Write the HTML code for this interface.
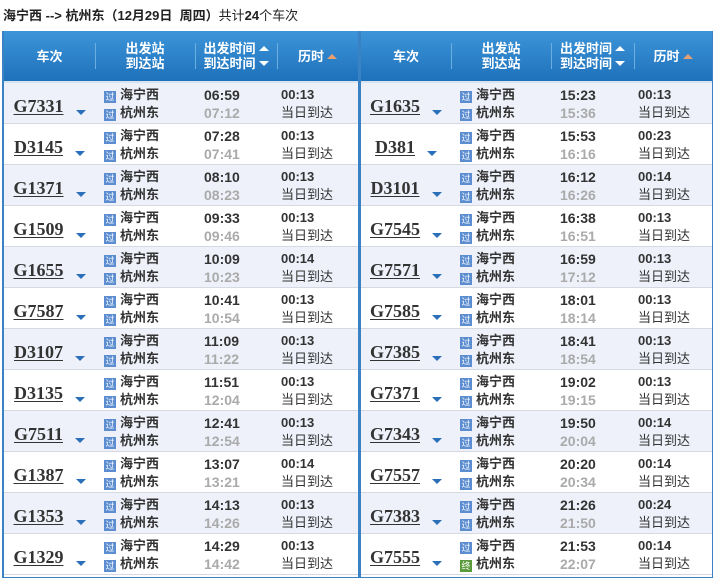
<!DOCTYPE html>
<html><head><meta charset="utf-8"><style>
*{margin:0;padding:0;box-sizing:border-box}
body{width:714px;height:578px;background:#fff;font-family:"Liberation Sans","Noto Sans CJK SC",sans-serif;color:#333;position:relative;overflow:hidden}
.title{position:absolute;left:3px;top:5px;font-size:13px;font-weight:bold;color:#222;white-space:nowrap}
.title span{font-weight:normal}
.tb{position:absolute;top:31px;height:547px;border-left:2px solid #3a82c4;border-right:1px solid #3a82c4;border-bottom:1px solid #3a82c4}
.hd{height:52px;background:linear-gradient(#3d95d8,#1e71bb);display:flex;color:#fff;font-weight:bold;font-size:13px;border-bottom:2px solid #d6e4f2}
.hd>div{display:flex;align-items:center;justify-content:center;text-align:center;line-height:15px;position:relative;white-space:nowrap}
.hd>div+div:before{content:"";position:absolute;left:0;top:12px;bottom:12px;border-left:1px solid #6aaee2}
.up{display:inline-block;width:0;height:0;border:5px solid transparent;border-bottom:5px solid #fff;border-top:0;margin-left:3px;vertical-align:2px}
.dn{display:inline-block;width:0;height:0;border:5px solid transparent;border-top:5px solid #fff;border-bottom:0;margin-left:3px;vertical-align:2px}
.or{border-bottom-color:#e8a070}
.r{height:41px;display:flex;border-bottom:1px solid #d5d9e2}
.r:nth-child(odd){background:#eef1fa}
.c1{display:flex;align-items:center;justify-content:center;padding-top:6px}
.num{font-family:"Liberation Serif",serif;font-weight:bold;font-size:18px;text-decoration:underline;color:#333;text-underline-offset:2px}
.ar{display:inline-block;width:0;height:0;border:5px solid transparent;border-top:5px solid #2a6fb8;border-bottom:0;margin-left:12px;margin-top:12px}
.c2{padding-left:9px;padding-top:3px;font-size:13px;font-weight:bold;line-height:18px}
.ic{display:inline-block;width:12px;height:12px;background:#5b8dd0;color:#fff;font-size:9px;line-height:12px;text-align:center;vertical-align:-1px;margin-right:4px;font-weight:normal}
.ic.g{background:#5a9a3a}
.c3{padding-left:9px;padding-top:3px;font-size:14px;font-weight:bold;line-height:18px}
.c3 b{display:block;color:#aaa}
.c4{padding-left:4px;padding-top:3px;font-size:13px;line-height:18px}
.c4 b{display:block}
</style></head><body>
<div class="title">海宁西 --&gt; 杭州东（12月29日&nbsp; 周四）<span>共计</span>24<span>个车次</span></div>

<div class="tb" style="left:2px;width:357px">
<div class="hd"><div style="width:91px">车次</div><div style="width:100px"><span>出发站<br>到达站</span></div><div style="width:82px"><span>出发时间<span class="up"></span><br>到达时间<span class="dn"></span></span></div><div style="width:81px"><span>历时<span class="up or"></span></span></div></div>
<div>
<div class="r"><div class="c1" style="width:91px"><span class="num">G7331</span><span class="ar"></span></div><div class="c2" style="width:100px"><span class="ic">过</span>海宁西<br><span class="ic">过</span>杭州东</div><div class="c3" style="width:82px">06:59<b>07:12</b></div><div class="c4"><b>00:13</b>当日到达</div></div>
<div class="r"><div class="c1" style="width:91px"><span class="num">D3145</span><span class="ar"></span></div><div class="c2" style="width:100px"><span class="ic">过</span>海宁西<br><span class="ic">过</span>杭州东</div><div class="c3" style="width:82px">07:28<b>07:41</b></div><div class="c4"><b>00:13</b>当日到达</div></div>
<div class="r"><div class="c1" style="width:91px"><span class="num">G1371</span><span class="ar"></span></div><div class="c2" style="width:100px"><span class="ic">过</span>海宁西<br><span class="ic">过</span>杭州东</div><div class="c3" style="width:82px">08:10<b>08:23</b></div><div class="c4"><b>00:13</b>当日到达</div></div>
<div class="r"><div class="c1" style="width:91px"><span class="num">G1509</span><span class="ar"></span></div><div class="c2" style="width:100px"><span class="ic">过</span>海宁西<br><span class="ic">过</span>杭州东</div><div class="c3" style="width:82px">09:33<b>09:46</b></div><div class="c4"><b>00:13</b>当日到达</div></div>
<div class="r"><div class="c1" style="width:91px"><span class="num">G1655</span><span class="ar"></span></div><div class="c2" style="width:100px"><span class="ic">过</span>海宁西<br><span class="ic">过</span>杭州东</div><div class="c3" style="width:82px">10:09<b>10:23</b></div><div class="c4"><b>00:14</b>当日到达</div></div>
<div class="r"><div class="c1" style="width:91px"><span class="num">G7587</span><span class="ar"></span></div><div class="c2" style="width:100px"><span class="ic">过</span>海宁西<br><span class="ic">过</span>杭州东</div><div class="c3" style="width:82px">10:41<b>10:54</b></div><div class="c4"><b>00:13</b>当日到达</div></div>
<div class="r"><div class="c1" style="width:91px"><span class="num">D3107</span><span class="ar"></span></div><div class="c2" style="width:100px"><span class="ic">过</span>海宁西<br><span class="ic">过</span>杭州东</div><div class="c3" style="width:82px">11:09<b>11:22</b></div><div class="c4"><b>00:13</b>当日到达</div></div>
<div class="r"><div class="c1" style="width:91px"><span class="num">D3135</span><span class="ar"></span></div><div class="c2" style="width:100px"><span class="ic">过</span>海宁西<br><span class="ic">过</span>杭州东</div><div class="c3" style="width:82px">11:51<b>12:04</b></div><div class="c4"><b>00:13</b>当日到达</div></div>
<div class="r"><div class="c1" style="width:91px"><span class="num">G7511</span><span class="ar"></span></div><div class="c2" style="width:100px"><span class="ic">过</span>海宁西<br><span class="ic">过</span>杭州东</div><div class="c3" style="width:82px">12:41<b>12:54</b></div><div class="c4"><b>00:13</b>当日到达</div></div>
<div class="r"><div class="c1" style="width:91px"><span class="num">G1387</span><span class="ar"></span></div><div class="c2" style="width:100px"><span class="ic">过</span>海宁西<br><span class="ic">过</span>杭州东</div><div class="c3" style="width:82px">13:07<b>13:21</b></div><div class="c4"><b>00:14</b>当日到达</div></div>
<div class="r"><div class="c1" style="width:91px"><span class="num">G1353</span><span class="ar"></span></div><div class="c2" style="width:100px"><span class="ic">过</span>海宁西<br><span class="ic">过</span>杭州东</div><div class="c3" style="width:82px">14:13<b>14:26</b></div><div class="c4"><b>00:13</b>当日到达</div></div>
<div class="r"><div class="c1" style="width:91px"><span class="num">G1329</span><span class="ar"></span></div><div class="c2" style="width:100px"><span class="ic">过</span>海宁西<br><span class="ic">过</span>杭州东</div><div class="c3" style="width:82px">14:29<b>14:42</b></div><div class="c4"><b>00:13</b>当日到达</div></div>
</div></div>

<div class="tb" style="left:359px;width:354px">
<div class="hd"><div style="width:90px">车次</div><div style="width:100px"><span>出发站<br>到达站</span></div><div style="width:83px"><span>出发时间<span class="up"></span><br>到达时间<span class="dn"></span></span></div><div style="width:78px"><span>历时<span class="up or"></span></span></div></div>
<div>
<div class="r"><div class="c1" style="width:90px"><span class="num">G1635</span><span class="ar"></span></div><div class="c2" style="width:100px"><span class="ic">过</span>海宁西<br><span class="ic">过</span>杭州东</div><div class="c3" style="width:83px">15:23<b>15:36</b></div><div class="c4"><b>00:13</b>当日到达</div></div>
<div class="r"><div class="c1" style="width:90px"><span class="num">D381</span><span class="ar"></span></div><div class="c2" style="width:100px"><span class="ic">过</span>海宁西<br><span class="ic">过</span>杭州东</div><div class="c3" style="width:83px">15:53<b>16:16</b></div><div class="c4"><b>00:23</b>当日到达</div></div>
<div class="r"><div class="c1" style="width:90px"><span class="num">D3101</span><span class="ar"></span></div><div class="c2" style="width:100px"><span class="ic">过</span>海宁西<br><span class="ic">过</span>杭州东</div><div class="c3" style="width:83px">16:12<b>16:26</b></div><div class="c4"><b>00:14</b>当日到达</div></div>
<div class="r"><div class="c1" style="width:90px"><span class="num">G7545</span><span class="ar"></span></div><div class="c2" style="width:100px"><span class="ic">过</span>海宁西<br><span class="ic">过</span>杭州东</div><div class="c3" style="width:83px">16:38<b>16:51</b></div><div class="c4"><b>00:13</b>当日到达</div></div>
<div class="r"><div class="c1" style="width:90px"><span class="num">G7571</span><span class="ar"></span></div><div class="c2" style="width:100px"><span class="ic">过</span>海宁西<br><span class="ic">过</span>杭州东</div><div class="c3" style="width:83px">16:59<b>17:12</b></div><div class="c4"><b>00:13</b>当日到达</div></div>
<div class="r"><div class="c1" style="width:90px"><span class="num">G7585</span><span class="ar"></span></div><div class="c2" style="width:100px"><span class="ic">过</span>海宁西<br><span class="ic">过</span>杭州东</div><div class="c3" style="width:83px">18:01<b>18:14</b></div><div class="c4"><b>00:13</b>当日到达</div></div>
<div class="r"><div class="c1" style="width:90px"><span class="num">G7385</span><span class="ar"></span></div><div class="c2" style="width:100px"><span class="ic">过</span>海宁西<br><span class="ic">过</span>杭州东</div><div class="c3" style="width:83px">18:41<b>18:54</b></div><div class="c4"><b>00:13</b>当日到达</div></div>
<div class="r"><div class="c1" style="width:90px"><span class="num">G7371</span><span class="ar"></span></div><div class="c2" style="width:100px"><span class="ic">过</span>海宁西<br><span class="ic">过</span>杭州东</div><div class="c3" style="width:83px">19:02<b>19:15</b></div><div class="c4"><b>00:13</b>当日到达</div></div>
<div class="r"><div class="c1" style="width:90px"><span class="num">G7343</span><span class="ar"></span></div><div class="c2" style="width:100px"><span class="ic">过</span>海宁西<br><span class="ic">过</span>杭州东</div><div class="c3" style="width:83px">19:50<b>20:04</b></div><div class="c4"><b>00:14</b>当日到达</div></div>
<div class="r"><div class="c1" style="width:90px"><span class="num">G7557</span><span class="ar"></span></div><div class="c2" style="width:100px"><span class="ic">过</span>海宁西<br><span class="ic">过</span>杭州东</div><div class="c3" style="width:83px">20:20<b>20:34</b></div><div class="c4"><b>00:14</b>当日到达</div></div>
<div class="r"><div class="c1" style="width:90px"><span class="num">G7383</span><span class="ar"></span></div><div class="c2" style="width:100px"><span class="ic">过</span>海宁西<br><span class="ic">过</span>杭州东</div><div class="c3" style="width:83px">21:26<b>21:50</b></div><div class="c4"><b>00:24</b>当日到达</div></div>
<div class="r"><div class="c1" style="width:90px"><span class="num">G7555</span><span class="ar"></span></div><div class="c2" style="width:100px"><span class="ic">过</span>海宁西<br><span class="ic g">终</span>杭州东</div><div class="c3" style="width:83px">21:53<b>22:07</b></div><div class="c4"><b>00:14</b>当日到达</div></div>
</div></div>
</body></html>
